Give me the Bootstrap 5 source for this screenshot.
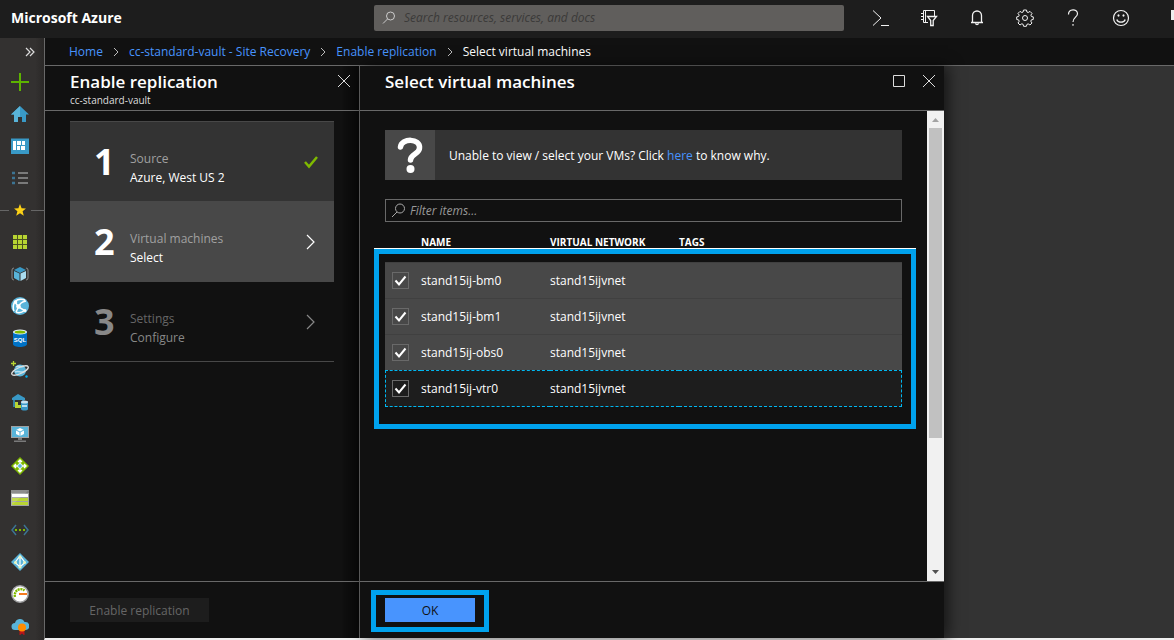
<!DOCTYPE html>
<html lang="en">
<head>
<meta charset="utf-8">
<meta name="viewport" content="width=device-width, initial-scale=1">
<title>Select virtual machines - Microsoft Azure</title>
<link rel="stylesheet" href="https://cdn.jsdelivr.net/npm/bootstrap@5.3.0/dist/css/bootstrap.min.css">
<style>
  body { font-family: "Open Sans", "Noto Sans", sans-serif; font-size: 12px; line-height: 18px; color: #fff; background: #333; }
  a { color: #4894fe; text-decoration: none; }
  svg { display: block; flex: none; }
  .line-icon { fill: none; stroke: currentColor; }
  .topbar { height: 38px; padding-bottom: 2px; background: #1d1d1d; }
  .brand-name { flex: 0 0 374px; padding-left: 11px; font-size: 14px; font-weight: 700; color: #fff; }
  .search-wrap { width: 40%; height: 26px; background: #605e5c; border-radius: 2px; color: #ccc; padding-left: 8px; }
  .plain-input { background: none; border: 0; outline: 0; padding: 0; color: #fff; font-style: italic; }
  .search-wrap .plain-input::placeholder { color: #3b3a39; opacity: 1; }
  .icon-btn { background: none; border: 0; padding: 0; color: #f2f2f2; display: flex; align-items: center; justify-content: center; }
  .topbar .icon-btn { width: 48px; height: 36px; }
  .rail { width: 44px; background: linear-gradient(90deg, #333130 80%, #2a2827); overflow: hidden; }
  .rail-item { height: 32px; flex: none; display: flex; align-items: center; width: 100%; justify-content: center; padding-right: 4px; }
  .rail-fold { height: 28px; padding: 0 0 0 16px; color: #ddd; }
  .rail-star::before, .rail-star::after { content: ""; height: 1px; background: #666; flex: 1; }
  .rail-star { padding: 0; gap: 4px; }
  .rail-star::before { flex: 0 0 9px; }
  .workspace { border-left: 1px solid #696969; border-bottom: 2px solid #f0f0f0; background: #333; }
  .crumbs { height: 28px; background: #111; padding-left: 24px; border-bottom: 1px solid #696969; }
  .crumb-sep { color: #bbb; margin: 0 10px; }
  .blades { display: grid; grid-template-columns: 315px minmax(0, 584px) minmax(0, 1fr); }
  .blade { background: #111; }
  .blade-first { border-right: 1px solid #696969; background: linear-gradient(90deg, #111 296px, #080808); }
  .blade-last { box-shadow: 4px 0 14px rgba(0, 0, 0, .6); }
  .blade-head { height: 45px; border-bottom: 1px solid #696969; padding: 4px 8px 0 25px; }
  .blade-foot { height: 57px; border-top: 1px solid #696969; padding: 0 25px; }
  .blade-title { font-size: 17px; line-height: 24px; font-weight: 600; margin: 0; }
  .blade-sub { font-size: 10px; line-height: 12px; color: #ddd; }
  .blade-head .icon-btn { width: 14px; height: 22px; color: #ddd; }
  .steps { padding: 10px 25px 0; }
  .step-item { height: 80px; width: 100%; border: 0; text-align: left; color: #fff; padding: 0 15px 0 24px; background: #333; border-top: 1px solid #484848; }
  .step-item.current { background: #484848; height: 81px; }
  .step-item.later { background: none; border-top: 0; border-bottom: 1px solid #484848; color: #888; }
  .step-no { font-size: 36px; line-height: 40px; font-weight: 700; width: 36px; }
  .step-text { line-height: 19px; padding-top: 12px; }
  .step-label { color: #a0a0a0; }
  .later .step-label { color: #666; }
  .flat-btn { border: 0; border-radius: 0; height: 24px; padding: 1px 0 0; font-size: 12px; line-height: 23px; }
  .flat-btn:disabled { width: 139px; background: #1d1d1d; color: #666; opacity: 1; }
  .ok-btn, .ok-btn:hover { width: 90px; background: #4894fe; color: #111; }
  .callout-ring { position: relative; }
  .callout-ring::after { content: ""; position: absolute; border: 5px solid #00a2ed; pointer-events: none; }
  .ok-ring::after { inset: -8px -14px -10px -14px; }
  .blade-body { padding: 19px 25px 0; }
  .note { height: 50px; background: #333; }
  .note-mark { width: 50px; height: 50px; background: #484848; }
  .note-text { padding: 2px 0 0 14px; }
  .filter-wrap { height: 23px; border: 1px solid #696969; margin-top: 19px; padding-left: 5px; color: #aaa; }
  .filter-wrap .plain-input::placeholder { color: #999; opacity: 1; }
  .vm-wrap { margin-top: 14px; }
  .vm-wrap::after { inset: 13px -14px -22px -11px; }
  .vm-wrap::before { content: ""; position: absolute; top: 12px; left: -11px; right: -14px; height: 1px; background: #fff; }
  .vm-table { width: 100%; table-layout: fixed; border-collapse: separate; border-spacing: 0; }
  .vm-table th, .vm-table td { padding: 0; }
  .vm-table th { height: 26px; font-size: 10px; line-height: 12px; font-weight: 700; vertical-align: top; }
  .vm-table td { height: 36px; background: #484848; border-top: 1px solid #404040; }
  .vm-table .focused td { background: #1d1d1d; border-top: 1px dashed #00b7f1; border-bottom: 1px dashed #00b7f1; height: 37px; }
  .vm-table .focused td:first-child { border-left: 1px dashed #00b7f1; }
  .vm-table .focused td:last-child { border-right: 1px dashed #00b7f1; }
  .vm-check.form-check-input { display: block; width: 17px; height: 17px; margin: 0 0 0 7px; border: 1px solid #696969; border-radius: 0; background-color: transparent; background-size: 13px 13px; background-position: center;
    background-image: url("data:image/svg+xml,%3Csvg xmlns='http://www.w3.org/2000/svg' viewBox='0 0 13 13'%3E%3Cpath d='M1.5 6.5l3.5 4 6.500-8' fill='none' stroke='white' stroke-width='2'/%3E%3C/svg%3E"); }
  .focused .vm-check.form-check-input { margin-left: 6px; }
  .scroll-track { width: 17px; background: #f1f1f1; padding: 0 2px; }
  .scroll-arrow { height: 17px; }
  .scroll-thumb { height: 66%; max-height: 310px; background: #c1c1c1; }
</style>
</head>
<body>
<div class="min-vh-100 d-flex flex-column">
  <header class="topbar d-flex align-items-center overflow-hidden">
    <a class="brand-name" href="#">Microsoft Azure</a>
    <div class="search-wrap d-flex align-items-center gap-2">
      <svg class="line-icon" width="14" height="14"><circle cx="8.500" cy="5" r="4"/><path d="M5.500 8L1 12.500"/></svg>
      <input class="plain-input flex-grow-1" type="text" aria-label="Search" placeholder="Search resources, services, and docs">
    </div>
    <nav class="ms-auto d-flex flex-shrink-0 align-items-center" aria-label="Tools">
      <button class="icon-btn" aria-label="Cloud shell"><svg class="line-icon" width="18" height="18"><path d="M1 1.500l8 7.500-8 7.500M9 16.500h8"/></svg></button>
      <button class="icon-btn" aria-label="Directory filter"><svg class="line-icon" width="18" height="18"><path d="M8 13.500H3.500v-12h11V7M5.500 1v12M1 4.500h3M1 7.500h3M1 10.500h3" /><path d="M7.500 7.500h9l-3.300 4v5h-2.500v-5z" stroke-width="1.300"/></svg></button>
      <button class="icon-btn" aria-label="Notifications"><svg class="line-icon" width="18" height="18"><path d="M3 13.500h12M4.500 13V6.500a4.500 4.500 0 0 1 9 0V13M7.500 14.500a1.600 1.600 0 0 0 3 0" stroke-width="1.300"/></svg></button>
      <button class="icon-btn" aria-label="Settings"><svg class="line-icon" width="18" height="18"><path d="M7.500 1h3l.4 2 1.300.5 1.800-1.100 2 2-1.100 1.700.5 1.400 1.900.4v2.500l-2 .5-.5 1.300 1.200 1.800-2 2-1.800-1.100-1.300.5-.5 1.900H7.600l-.5-2-1.300-.5L4 16l-2-2 1.200-1.800-.6-1.300-1.900-.4V7.900l2-.5.5-1.300L2 4.400l2-2 1.800 1.100L7.100 3z"/><circle cx="9" cy="9" r="2.500"/></svg></button>
      <button class="icon-btn" aria-label="Help"><svg class="line-icon" width="18" height="18"><path d="M4.500 5.500c0-6 9-6 9-.8 0 3.300-4.500 3.800-4.500 8.300M9 15v1.800" stroke-width="1.200"/></svg></button>
      <button class="icon-btn" aria-label="Feedback"><svg class="line-icon" width="18" height="18"><circle cx="9" cy="9" r="7.500" stroke-width="1.200"/><path d="M4.800 10.500c1.200 3.600 7.200 3.600 8.400 0M5.500 6.500h2M10.500 6.500h2" stroke-width="1.300"/><path d="M6.500 5.500v2M11.500 5.500v2"/></svg></button>
      <svg class="ms-4" width="5" height="18"><path d="M2 1h3v10H2z" fill="#eee"/></svg>
    </nav>
  </header>

  <div class="d-flex flex-grow-1">
    <div class="position-relative rail flex-shrink-0">
    <nav class="position-absolute w-100" aria-label="Services">
      <button class="icon-btn rail-item rail-fold" aria-label="Expand menu"><svg class="line-icon" width="10" height="10"><path d="M1 1l4 4-4 4M5 1l4 4-4 4" stroke-width="1.200"/></svg></button>
      <a class="rail-item" href="#" aria-label="Create"><svg width="18" height="18"><path d="M0 9h18M9 0v18" stroke="#5db300" stroke-width="2"/></svg></a>
      <a class="rail-item" href="#" aria-label="Home"><svg width="18" height="18"><path d="M9 1L0 9.500h3V17h4v-5h4v5h4V9.500h3z" fill="#3999c6"/><path d="M9 1L0 9.500h3V17h4v-5h2z" fill="#59b4d9"/></svg></a>
      <a class="rail-item" href="#" aria-label="Dashboard"><svg width="18" height="18"><path d="M0 1.500h18V17H0z" fill="#3999c6"/><path d="M2 4h3v9H2zM6 4h4v4H6zM11 4h3v4h-3zM6 9h3v4H6zM10 9h4v4h-4z" fill="#fff"/></svg></a>
      <a class="rail-item" href="#" aria-label="All services"><svg width="18" height="18"><path d="M7 4h10M7 9h10M7 14h10" stroke="#7a7a7a" stroke-width="2"/><path d="M1 4h3M1 9h3M1 14h3" stroke="#3c7493" stroke-width="2.400"/></svg></a>
      <div class="rail-item rail-star"><svg width="14" height="14"><path d="M7 1l1.600 4.200 4.400.3-3.400 2.800 1.200 4.400L7 10.200l-3.800 2.500 1.200-4.400L1 5.500l4.400-.3z" fill="#fcd116"/></svg></div>
      <a class="rail-item" href="#" aria-label="All resources"><svg width="18" height="18"><path d="M2 2h14v14H2z" fill="#b8d432"/><path d="M6.500 2v14M11.500 2v14M2 6.500h14M2 11.500h14" stroke="#4b5320"/></svg></a>
      <a class="rail-item" href="#" aria-label="Resource groups"><svg width="18" height="18"><path d="M3 3Q1 3 1 5v8q0 2 2 2M15 3q2 0 2 2v8q0 2-2 2" fill="none" stroke="#8a8a8a"/><path d="M9 2l6 3-6 3-6-3z" fill="#3999c6"/><path d="M3 6l5.500 2.500V16L3 13z" fill="#59b4d9"/><path d="M15 6L9.500 8.500V16l5.500-3z" fill="#a9dcf0"/></svg></a>
      <a class="rail-item" href="#" aria-label="App services"><svg width="18" height="18"><circle cx="9" cy="9" r="9" fill="#59b4d9"/><path d="M4 4.500Q8 1 14 3M4 4.500Q1 9 3 14M4 5l3.500 5 6 3.500M7.500 10L5 15M7.500 10Q9 5 15 4M13.500 13.500Q9 17 5 15" fill="none" stroke="#fff" stroke-width="1.500"/><circle cx="4.500" cy="5" r="1.800" fill="#fff"/><circle cx="7.500" cy="9.500" r="2.300" fill="#fff"/><circle cx="14" cy="13.500" r="1.500" fill="#fff"/></svg></a>
      <a class="rail-item" href="#" aria-label="SQL databases"><svg width="18" height="18"><path d="M2 3v12c0 4 14 4 14 0V3z" fill="#0072c6"/><ellipse cx="9" cy="3" rx="7" ry="2.500" fill="#e8f2fa"/><ellipse cx="9" cy="3" rx="5.500" ry="1.600" fill="#7fba00"/><text x="9" y="13" font-family="Liberation Sans" font-size="6" font-weight="700" text-anchor="middle" fill="#fff">SQL</text></svg></a>
      <a class="rail-item" href="#" aria-label="Cosmos DB"><svg width="18" height="18"><circle cx="9" cy="9.500" r="6" fill="#59b4d9"/><path d="M5 6c3-2 6 1 8-1M4 11c4-2 6 2 10-1" stroke="#b7dff0" fill="none" stroke-width="1.500"/><ellipse cx="9" cy="9.500" rx="9" ry="3" transform="rotate(-25 9 9.500)" fill="none" stroke="#ddd" stroke-width="1.300"/><path d="M2.500 0v5M0 2.500h5" stroke="#b8d432" stroke-width="1.300"/><circle cx="15.500" cy="15.500" r="1.200" fill="#00abec"/></svg></a>
      <a class="rail-item" href="#" aria-label="Data warehouse"><svg width="18" height="18"><path d="M1 5l6-4 7 4v2H1z" fill="#3999c6"/><path d="M3 7v7M12 7v3" stroke="#3999c6" stroke-width="1.500"/><path d="M4 9h3v3h3v3H4z" fill="#b8d432"/><path d="M10 9v7c0 2 7 2 7 0V9z" fill="#3999c6"/><ellipse cx="13.500" cy="9" rx="3.500" ry="1.500" fill="#c9e3ef"/><path d="M11 13h5" stroke="#b7dff0" stroke-width="2"/></svg></a>
      <a class="rail-item" href="#" aria-label="Virtual machines"><svg width="18" height="18"><path d="M0 1h18v12H0z" fill="#a0a1a2"/><path d="M1 2h16v10H1z" fill="#59b4d9"/><path d="M9 3l4 2v4l-4 2-4-2V5z" fill="#fff"/><path d="M5 5l4 2 4-2M9 7v4" stroke="#59b4d9" fill="none"/><path d="M7 13h4v2H7zM3 15.500h12V17H3z" fill="#7a7a7a"/></svg></a>
      <a class="rail-item" href="#" aria-label="Load balancers"><svg width="18" height="18"><path d="M9 0l9 9-9 9-9-9z" fill="#7fba00"/><path d="M9 3v12M3 9h12M7 5l2-2 2 2M7 13l2 2 2-2M5 7L3 9l2 2M13 7l2 2-2 2" fill="none" stroke="#fff" stroke-width="1.400"/><circle cx="9" cy="9" r="2.300" fill="#59b4d9" stroke="#fff" stroke-width=".8"/></svg></a>
      <a class="rail-item" href="#" aria-label="Storage accounts"><svg width="18" height="18"><path d="M0 1h18v16H0z" fill="#a0a1a2"/><path d="M0 1h18v3H0z" fill="#7a7a7a"/><path d="M1 5h16v3H1z" fill="#fff"/><path d="M1 9h16v3H1zM1 13h16v3H1z" fill="#b8d432"/><path d="M0 1h18L0 17z" fill="#fff" opacity=".15"/></svg></a>
      <a class="rail-item" href="#" aria-label="Virtual networks"><svg width="18" height="18"><path d="M5 4L1 9l4 5M13 4l4 5-4 5" fill="none" stroke="#3c7493" stroke-width="1.500"/><path d="M4 9h2M8 9h2M12 9h2" stroke="#7fba00" stroke-width="2.200"/></svg></a>
      <a class="rail-item" href="#" aria-label="Active Directory"><svg width="18" height="18"><path d="M9 0l9 9-9 9-9-9z" fill="#59b4d9"/><path d="M9 3v12M9 3L4 9.500l5 4.500 5-4.500z" fill="none" stroke="#fff" stroke-width="1.200"/><circle cx="9" cy="4" r="1.500" fill="#e5f5c0"/><circle cx="4.500" cy="9.500" r="1.500" fill="#e5f5c0"/><circle cx="13.500" cy="9.500" r="1.500" fill="#e5f5c0"/><circle cx="9" cy="14" r="1.600" fill="#e5f5c0"/></svg></a>
      <a class="rail-item" href="#" aria-label="Monitor"><svg width="18" height="18"><circle cx="9" cy="9" r="8.200" fill="#fff" stroke="#a0a1a2" stroke-width="1.500"/><path d="M4 12a6 6 0 0 1 9.500-6.500" fill="none" stroke="#7fba00" stroke-width="2.400" stroke-dasharray="2 .7"/><path d="M8 8h8v2H8z" fill="#f47b20"/></svg></a>
      <a class="rail-item" href="#" aria-label="Advisor"><svg width="18" height="18"><path d="M4 13a3.500 3.500 0 0 1 0-7 5 5 0 0 1 9.500-1A4 4 0 0 1 15 13z" fill="#59b4d9"/><path d="M8.500 12h5v6.500L11 16.500l-2.500 2z" fill="#ba141a"/><circle cx="11" cy="10.500" r="4" fill="#ff8c00"/></svg></a>
    </nav>
    </div>

    <main class="workspace flex-grow-1 d-flex flex-column">
      <nav class="crumbs d-flex align-items-center" aria-label="Breadcrumb">
        <a href="#">Home</a><svg class="line-icon crumb-sep" width="6" height="10"><path d="M1 1l4 4-4 4"/></svg>
        <a href="#">cc-standard-vault - Site Recovery</a><svg class="line-icon crumb-sep" width="6" height="10"><path d="M1 1l4 4-4 4"/></svg>
        <a href="#">Enable replication</a><svg class="line-icon crumb-sep" width="6" height="10"><path d="M1 1l4 4-4 4"/></svg>
        <span>Select virtual machines</span>
      </nav>
      <div class="blades flex-grow-1">
        <section class="blade blade-first d-flex flex-column">
          <div class="blade-head d-flex justify-content-between">
            <div><h2 class="blade-title">Enable replication</h2><div class="blade-sub">cc-standard-vault</div></div>
            <button class="icon-btn" aria-label="Close"><svg class="line-icon" width="14" height="14"><path d="M1 1l12 12M13 1L1 13"/></svg></button>
          </div>
          <div class="steps flex-grow-1">
            <button class="step-item d-flex align-items-center">
              <span class="step-no">1</span>
              <span class="step-text flex-grow-1"><span class="step-label d-block">Source</span><span class="d-block">Azure, West US 2</span></span>
              <svg width="16" height="14" fill="none" stroke="#7fba00" stroke-width="2.500"><path d="M2 7l4 4.500L14 2"/></svg>
            </button>
            <button class="step-item current d-flex align-items-center">
              <span class="step-no">2</span>
              <span class="step-text flex-grow-1"><span class="step-label d-block">Virtual machines</span><span class="d-block">Select</span></span>
              <svg class="line-icon" width="16" height="16"><path d="M4 1l7 7-7 7" stroke-width="1.200"/></svg>
            </button>
            <button class="step-item later d-flex align-items-center">
              <span class="step-no">3</span>
              <span class="step-text flex-grow-1"><span class="step-label d-block">Settings</span><span class="d-block">Configure</span></span>
              <svg class="line-icon" width="16" height="16"><path d="M4 1l7 7-7 7" stroke-width="1.200"/></svg>
            </button>
          </div>
          <div class="blade-foot d-flex align-items-center"><button class="btn flat-btn" disabled>Enable replication</button></div>
        </section>

        <section class="blade blade-last d-flex flex-column">
          <div class="blade-head d-flex justify-content-between">
            <h2 class="blade-title">Select virtual machines</h2>
            <div class="d-flex gap-3">
              <button class="icon-btn" aria-label="Maximize"><svg class="line-icon" width="14" height="14"><path d="M1.500 1.500h11v11h-11z"/></svg></button>
              <button class="icon-btn" aria-label="Close"><svg class="line-icon" width="14" height="14"><path d="M1 1l12 12M13 1L1 13"/></svg></button>
            </div>
          </div>
          <div class="d-flex flex-grow-1">
            <div class="blade-body flex-grow-1">
              <div class="note d-flex align-items-center">
                <div class="note-mark d-flex align-items-center justify-content-center">
                  <svg width="28" height="38" fill="none" stroke="#fff"><path d="M4.500 11c1-9 20-9 19 1 0 6-9 6-9 12" stroke-width="5.500" stroke-linecap="round"/><circle cx="14.500" cy="33" r="4" fill="#fff" stroke="none"/></svg>
                </div>
                <span class="note-text">Unable to view / select your VMs? Click <a href="#">here</a> to know why.</span>
              </div>
              <div class="filter-wrap d-flex align-items-center gap-1">
                <svg class="line-icon" width="15" height="15"><circle cx="9" cy="5.500" r="4.500"/><path d="M6 9l-5 5"/></svg>
                <input class="plain-input flex-grow-1" type="text" aria-label="Filter items" placeholder="Filter items...">
              </div>
              <div class="vm-wrap callout-ring">
                <table class="vm-table">
                  <colgroup><col style="width:36px"><col style="width:129px"><col style="width:129px"><col></colgroup>
                  <thead><tr><th></th><th>NAME</th><th>VIRTUAL NETWORK</th><th>TAGS</th></tr></thead>
                  <tbody>
                    <tr><td><input class="form-check-input vm-check" type="checkbox" id="vm0" checked></td><td><label for="vm0">stand15ij-bm0</label></td><td>stand15ijvnet</td><td></td></tr>
                    <tr><td><input class="form-check-input vm-check" type="checkbox" id="vm1" checked></td><td><label for="vm1">stand15ij-bm1</label></td><td>stand15ijvnet</td><td></td></tr>
                    <tr><td><input class="form-check-input vm-check" type="checkbox" id="vm2" checked></td><td><label for="vm2">stand15ij-obs0</label></td><td>stand15ijvnet</td><td></td></tr>
                    <tr class="focused"><td><input class="form-check-input vm-check" type="checkbox" id="vm3" checked></td><td><label for="vm3">stand15ij-vtr0</label></td><td>stand15ijvnet</td><td></td></tr>
                  </tbody>
                </table>
              </div>
            </div>
            <div class="scroll-track d-flex flex-column flex-shrink-0" aria-hidden="true">
              <svg class="scroll-arrow" width="13" height="17"><path d="M3 11h7L6.500 7z" fill="#a3a3a3"/></svg>
              <div class="scroll-thumb"></div>
              <svg class="scroll-arrow mt-auto" width="13" height="17"><path d="M3 6h7l-3.500 4z" fill="#505050"/></svg>
            </div>
          </div>
          <div class="blade-foot d-flex align-items-center"><div class="callout-ring ok-ring"><button class="btn flat-btn ok-btn">OK</button></div></div>
        </section>
      </div>
    </main>
  </div>
</div>
<script src="https://cdn.jsdelivr.net/npm/bootstrap@5.3.0/dist/js/bootstrap.bundle.min.js"></script>
</body>
</html>
